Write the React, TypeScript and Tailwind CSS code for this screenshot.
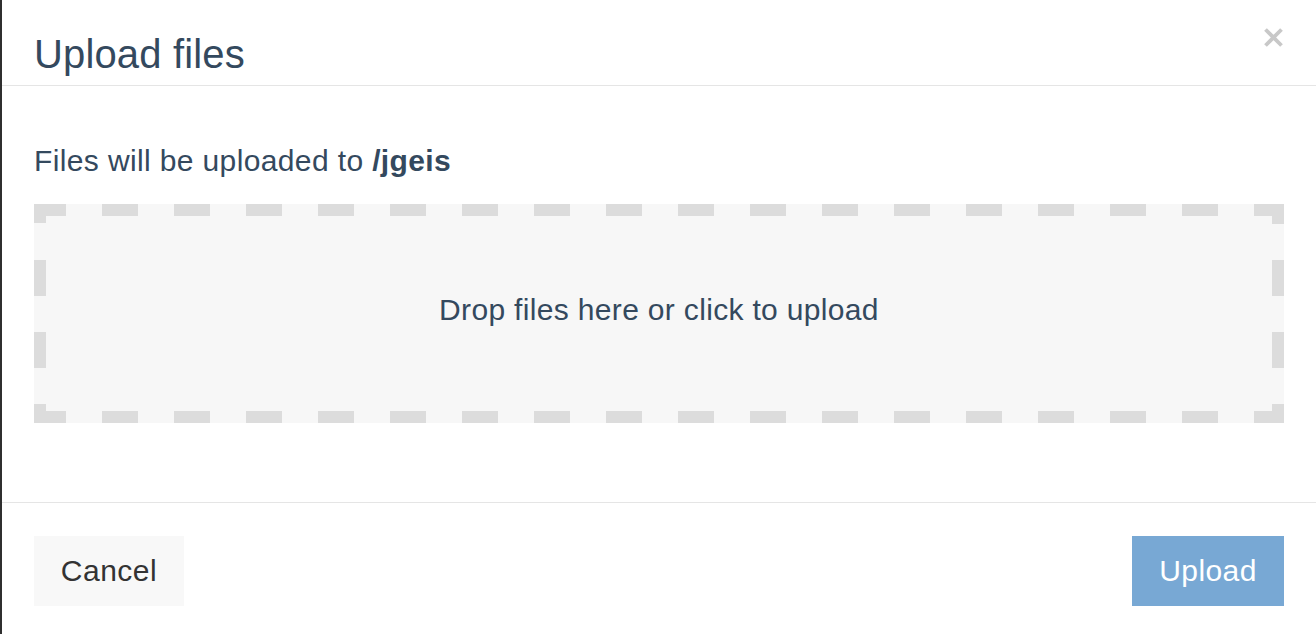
import React from "react";

const W = 1250;
const H = 219;
const T = 12;
const DASH = 36;
const PERIOD = 72;

function DashedFrame() {
  const rects: { x: number; y: number; w: number; h: number }[] = [];
  // corners
  rects.push({ x: 0, y: 0, w: 32, h: T });
  rects.push({ x: 0, y: 0, w: T, h: 19 });
  rects.push({ x: 1220, y: 0, w: 30, h: T });
  rects.push({ x: W - T, y: 0, w: T, h: 20 });
  rects.push({ x: 0, y: H - T, w: 32, h: T });
  rects.push({ x: 0, y: 200, w: T, h: 19 });
  rects.push({ x: 1220, y: H - T, w: 30, h: T });
  rects.push({ x: W - T, y: 200, w: T, h: 19 });
  // horizontal dashes
  for (let k = 0; k <= 15; k++) {
    const x = 68 + PERIOD * k;
    rects.push({ x, y: 0, w: DASH, h: T });
    rects.push({ x, y: H - T, w: DASH, h: T });
  }
  // vertical dashes
  for (let k = 0; k <= 1; k++) {
    const y = 56 + PERIOD * k;
    rects.push({ x: 0, y, w: T, h: DASH });
    rects.push({ x: W - T, y, w: T, h: DASH });
  }
  return (
    <svg
      className="absolute inset-0 pointer-events-none"
      width={W}
      height={H}
      viewBox={`0 0 ${W} ${H}`}
    >
      {rects.map((r, i) => (
        <rect key={i} x={r.x} y={r.y} width={r.w} height={r.h} fill="#dcdcdc" />
      ))}
    </svg>
  );
}

export default function App() {
  return (
    <div
      className="w-[1316px] h-[634px] bg-white border-l-2 border-[#2f2f2f] overflow-hidden"
      style={{ fontFamily: '"Liberation Sans", Arial, Helvetica, sans-serif' }}
    >
      {/* Header */}
      <div className="h-[86px] border-b border-[#e5e5e5] flex justify-between items-start pl-[32px] pr-[33px]">
        <h1 className="mt-[30px] text-[40px] leading-[48px] tracking-[0.15px] text-[#34495e] font-normal">
          Upload files
        </h1>
        <button className="mt-[28px] w-[19px] h-[19px]" aria-label="Close">
          <svg width="19" height="19" viewBox="0 0 19 19">
            <path
              d="M1.5 1.5 L17.5 17.5 M17.5 1.5 L1.5 17.5"
              stroke="#c8c8c8"
              strokeWidth="3.8"
              strokeLinecap="butt"
            />
          </svg>
        </button>
      </div>

      {/* Body */}
      <div className="h-[417px] border-b border-[#e5e5e5] px-[32px] pt-[57px]">
        <p className="text-[30px] leading-[36px] tracking-[0.37px] text-[#34495e]">
          Files will be uploaded to <span className="font-bold">/jgeis</span>
        </p>
        <div className="relative mt-[25px] w-[1250px] h-[219px] bg-[#f7f7f7] flex items-center justify-center pb-[7px] cursor-pointer">
          <DashedFrame />
          <span className="relative text-[30px] leading-[36px] tracking-[0.33px] text-[#34495e]">
            Drop files here or click to upload
          </span>
        </div>
      </div>

      {/* Footer */}
      <div className="flex justify-between items-start px-[32px] pt-[33px]">
        <button className="w-[150px] h-[70px] bg-[#f8f8f8] text-[#333333] text-[30px] leading-[36px] tracking-[0.5px] flex items-center justify-center">
          Cancel
        </button>
        <button className="w-[152px] h-[70px] bg-[#78a8d4] text-white text-[30px] leading-[36px] tracking-[0.4px] flex items-center justify-center">
          Upload
        </button>
      </div>
    </div>
  );
}
